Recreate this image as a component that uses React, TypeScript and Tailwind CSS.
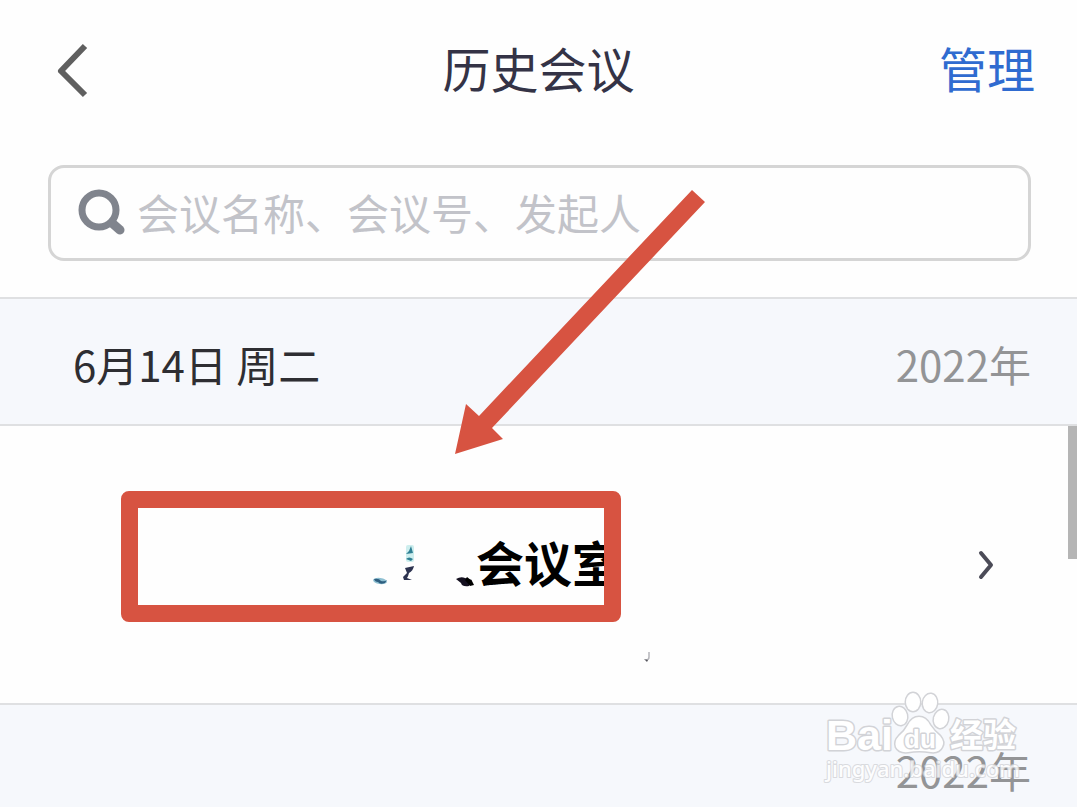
import React from 'react';

const BackIcon: React.FC = () => (
  <svg width="34" height="56" viewBox="0 0 34 56" fill="none" stroke="#5f5f5f" strokeWidth="6">
    <path d="M29 3 L5 28 L29 52" strokeLinejoin="round" />
  </svg>
);

const SearchIcon: React.FC = () => (
  <svg width="48" height="48" viewBox="0 0 48 48" fill="none" stroke="#80848d" className="shrink-0">
    <circle cx="22" cy="21" r="17" strokeWidth="7" />
    <path d="M35 34 L43 41" strokeWidth="9" strokeLinecap="round" />
  </svg>
);

const ChevronIcon: React.FC = () => (
  <svg width="20" height="32" viewBox="0 0 20 32" fill="none" stroke="#4b4b57" strokeWidth="4" strokeLinecap="round" strokeLinejoin="round">
    <path d="M4 4 L14 16 L4 28" />
  </svg>
);

// Leftovers of the erased meeting owner name
const Smudges: React.FC = () => (
  <svg width="108" height="48" viewBox="0 0 108 48" className="shrink-0">
    <ellipse cx="12" cy="40" rx="7" ry="3" fill="#8fc0d2" transform="rotate(8 12 40)" />
    <path d="M6 38 q5 -1 7 2 q4 1 6 -1 l-2 3 q-5 2 -7 -1 q-3 0 -4 -3z" fill="#2f5f80" />
    <rect x="38" y="4" width="8" height="17" rx="2" fill="#cdeeee" />
    <path d="M43 5 l2 7 -7 1 3 -3z M38 18 q3 -3 7 0 l-2 2z" fill="#2f7f93" />
    <path d="M37 27 l9 -2 q-1 5 -5 7 q-1 4 -2 5 l5 2 -8 0 -1 -3 4 -4z" fill="#2d3350" />
    <path d="M88 38 q5 -3 9 -1 l7 2 -3 6 q-7 1 -8 -3z" fill="#14101f" />
    <path d="M99 36 l5 4 2 4 -4 1 -5 -6z" fill="#000" />
  </svg>
);

const DateBar: React.FC<{ date?: string; year: string }> = ({ date, year }) => (
  <div className="flex h-[129px] items-center justify-between border-y-2 border-[#dfe0e2] bg-[#f6f8fc] pt-1 pr-[46px] pl-[73px] text-[42px] leading-[60px]">
    <h2 className="text-[#2e2e32]">{date}</h2>
    <span className="text-[#939496]">{year}</span>
  </div>
);

const Watermark: React.FC = () => (
  <svg
    width="200"
    height="100"
    viewBox="0 0 200 100"
    className="absolute right-[55px] bottom-[18px]"
    fill="#ffffff"
    stroke="#d2d3d7"
    strokeWidth="3"
    paintOrder="stroke"
    strokeLinejoin="round"
    fontFamily='"Liberation Sans", "Noto Sans CJK SC", sans-serif'
    fontWeight="700"
  >
    <text x="4" y="61" fontSize="43">Bai</text>
    <ellipse cx="78" cy="27" rx="7" ry="9" transform="rotate(-12 78 27)" />
    <ellipse cx="91" cy="13" rx="7" ry="9" />
    <ellipse cx="108" cy="14" rx="7" ry="9" transform="rotate(8 108 14)" />
    <ellipse cx="119" cy="30" rx="7" ry="9" transform="rotate(14 119 30)" />
    <path d="M97 28 q7 0 11 8 q4 6 10 11 q5 6 2 11 q-3 6 -11 5 q-12 -2 -23 0 q-9 1 -12 -5 q-2 -6 3 -11 q6 -5 9 -11 q4 -8 11 -8z" />
    <text x="82" y="59" fontSize="26">du</text>
    <text x="128" y="58" fontSize="33">经验</text>
    <text x="4" y="88" fontSize="22" fontWeight="500" fontFamily='"Noto Sans", sans-serif' strokeWidth="2" opacity="0.8">
      jingyan.baidu.com
    </text>
  </svg>
);

const App: React.FC = () => {
  return (
    <div className="relative h-screen overflow-hidden bg-[#fefefe] font-['Noto_Sans_CJK_SC',sans-serif]">
      <header className="grid h-[141px] grid-cols-3 items-center px-[42px] text-5xl">
        <button aria-label="返回" className="justify-self-start pl-3.5">
          <BackIcon />
        </button>
        <h1 className="pb-2 text-center text-[#343346]">历史会议</h1>
        <button className="justify-self-end pb-2 text-[#2f6bd0]">管理</button>
      </header>

      <div className="px-[46px] pt-6 pb-9 pl-12">
        <label className="flex h-24 items-center rounded-2xl border-[3px] border-[#d5d5d5] pl-[26px]">
          <SearchIcon />
          <input
            type="search"
            aria-label="搜索会议"
            placeholder="会议名称、会议号、发起人"
            className="ml-3 h-16 min-w-0 flex-1 bg-transparent pb-1 text-[42px] outline-none placeholder:text-[#c2c3c9]"
          />
        </label>
      </div>

      <DateBar date="6月14日 周二" year="2022年" />

      <main className="relative">
        <a href="#meeting" className="flex h-[277px] items-center pr-20">
          <span className="ml-[368px]">
            <Smudges />
          </span>
          <span className="flex-1 pb-2 text-5xl font-bold whitespace-nowrap text-black">会议室</span>
          <ChevronIcon />
        </a>
        <svg width="10" height="12" viewBox="0 0 10 12" className="absolute bottom-10 left-[641px]">
          <path d="M8 1 v5 q0 3 -3 3" fill="none" stroke="#b5b5ba" strokeWidth="1.5" />
          <path d="M3 8 l4 1 -1 2z" fill="#55555c" />
        </svg>
        {/* highlight frame */}
        <div className="absolute top-[65px] left-[121px] h-[131px] w-[500px] rounded-lg border-[17px] border-[#d75341]"></div>
        {/* scrollbar thumb */}
        <div className="absolute top-0 right-0 h-[133px] w-[9px] bg-[#b5b5b5]"></div>
      </main>

      <DateBar year="2022年" />

      <svg width="250" height="264" viewBox="0 0 250 264" fill="#d75341" className="absolute top-[190px] left-[455px]">
        <path d="M237 0 L250 12 L37 238 L48 249 L0 264 L11 214 L24 226 Z" />
      </svg>

      <Watermark />
    </div>
  );
};

export default App;
